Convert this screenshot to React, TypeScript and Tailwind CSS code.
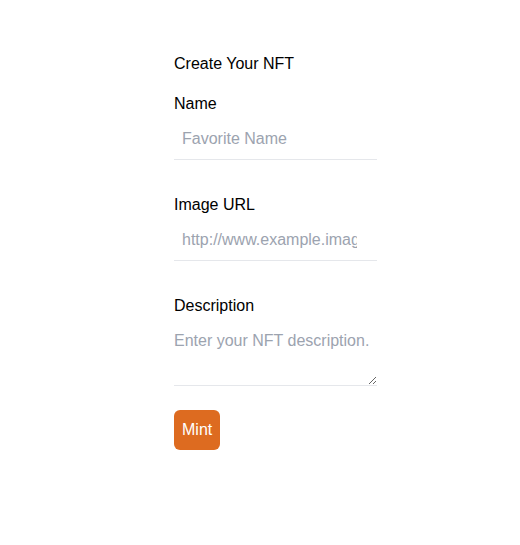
import React from "react";

export default function App() {
  return (
    <div className="min-h-[545px] bg-white" style={{ fontFamily: '"Liberation Sans", Arial, sans-serif' }}>
      <div className="ml-[174px] w-[203px] pt-[52px] flex flex-col text-[16px] leading-6 text-black">
        <h1 className="font-normal">Create Your NFT</h1>
        <label className="mt-4">Name</label>
        <input
          className="mt-[3px] w-full border-b border-[#e5e7eb] pl-2 pr-5 py-2 outline-none placeholder:text-[#9ca3af]"
          placeholder="Favorite Name"
        />
        <label className="mt-[33px]">Image URL</label>
        <input
          className="mt-[3px] w-full border-b border-[#e5e7eb] pl-2 pr-5 py-2 outline-none placeholder:text-[#9ca3af]"
          placeholder="http://www.example.image"
        />
        <label className="mt-[33px]">Description</label>
        <textarea
          className="mt-[3px] w-full border-b border-[#e5e7eb] py-2 outline-none placeholder:text-[#9ca3af]"
          rows={2}
          placeholder="Enter your NFT description."
        />
        <div className="mt-6">
          <button className="rounded-md bg-[#dd6b20] px-2 py-2 text-white">Mint</button>
        </div>
      </div>
    </div>
  );
}
